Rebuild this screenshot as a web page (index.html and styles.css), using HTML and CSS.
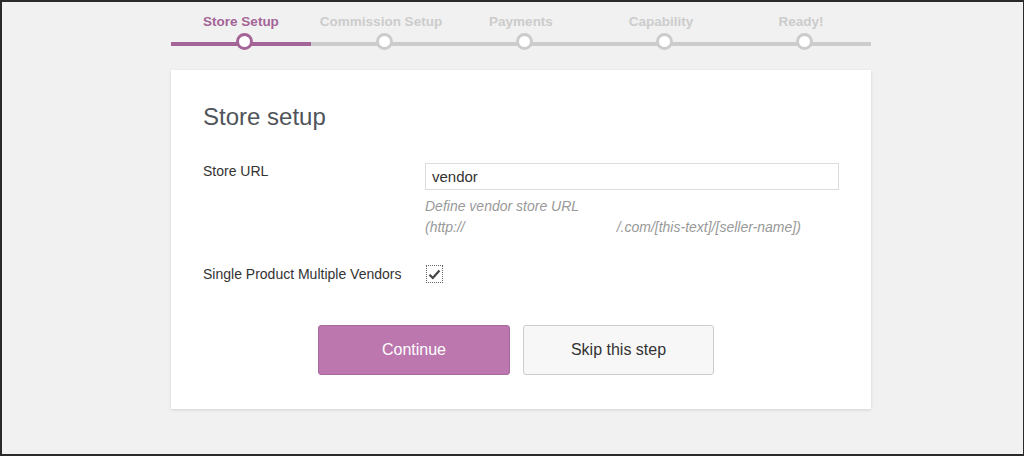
FILE: index.html
```html
<!DOCTYPE html>
<html>
<head>
<meta charset="utf-8">
<link rel="stylesheet" href="styles.css">
</head>
<body>
<div class="wrap">
  <ol class="steps">
    <li class="step active">Store Setup</li>
    <li class="step">Commission Setup</li>
    <li class="step">Payments</li>
    <li class="step">Capability</li>
    <li class="step">Ready!</li>
  </ol>
  <div class="card">
    <h1 class="title">Store setup</h1>
    <div class="row">
      <div class="label">Store URL</div>
      <div class="field">
        <div class="input">vendor</div>
        <p class="desc">Define vendor store URL<br>(http://<span class="redact"></span>/.com/[this-text]/[seller-name])</p>
      </div>
    </div>
    <div class="row row-check">
      <div class="label">Single Product Multiple Vendors</div>
      <div class="field">
        <span class="checkbox"><svg width="13" height="11" viewBox="0 0 13 11"><path d="M1.5 5.8 L4.8 9 L11.5 1.5" fill="none" stroke="#444" stroke-width="2.2"/></svg></span>
      </div>
    </div>
    <div class="actions">
      <div class="btn btn-primary">Continue</div>
      <div class="btn btn-secondary">Skip this step</div>
    </div>
  </div>
</div>
</body>
</html>
```

FILE: styles.css
```css
* { box-sizing: border-box; }
html, body { margin: 0; padding: 0; }
body {
  width: 1024px;
  height: 456px;
  background: #f1f1f1;
  border-top: 2px solid #2a2a2a;
  border-left: 2px solid #2a2a2a;
  border-bottom: 2px solid #2a2a2a;
  border-right: 1px solid #2a2a2a;
  font-family: "Liberation Sans", Arial, sans-serif;
  overflow: hidden;
}
.wrap {
  width: 700px;
  margin-left: 169px;
}
.steps {
  list-style: none;
  margin: 0;
  padding: 0;
  display: flex;
}
.step {
  position: relative;
  flex: 1;
  text-align: center;
  font-size: 13.5px;
  font-weight: 700;
  line-height: 20px;
  color: #ccc;
  padding: 10px 0 10px;
  border-bottom: 4px solid #ccc;
}
.step::before {
  content: "";
  position: absolute;
  left: calc(50% - 5.5px);
  bottom: -7.5px;
  width: 11px;
  height: 11px;
  border-radius: 50%;
  border: 3px solid #ccc;
  background: #fff;
}
.step.active {
  color: #a46497;
  border-bottom-color: #a46497;
}
.step.active::before {
  border-color: #a46497;
}
.card {
  margin-top: 24px;
  background: #fff;
  box-shadow: 0 1px 3px rgba(0,0,0,0.13);
  padding: 32px 32px 34px;
}
.title {
  margin: 0;
  font-size: 24px;
  line-height: 30px;
  font-weight: 400;
  color: #50545a;
}
.row {
  display: grid;
  grid-template-columns: 222px 1fr;
  margin-top: 31px;
}
.row-check {
  margin-top: 27px;
  align-items: center;
}
.label {
  font-size: 14px;
  line-height: 16px;
  color: #333;
}
.row-check .label { line-height: 18px; }
.input {
  height: 27px;
  border: 1px solid #ddd;
  font-size: 15px;
  line-height: 25px;
  padding: 0 6px;
  color: #333;
}
.desc {
  margin: 6px 0 0;
  font-size: 14px;
  line-height: 21px;
  font-style: italic;
  color: #999;
}
.redact {
  display: inline-block;
  width: 152px;
}
.checkbox {
  display: flex;
  align-items: center;
  justify-content: center;
  width: 17px;
  height: 18px;
  margin-left: 1px;
  border: 1px dotted #666;
  background: #fff;
}
.actions {
  display: flex;
  justify-content: center;
  gap: 13px;
  margin-top: 42px;
  padding-right: 10px;
}
.btn {
  width: 192px;
  height: 50px;
  border-radius: 3px;
  font-size: 16px;
  display: flex;
  align-items: center;
  justify-content: center;
}
.btn-primary {
  background: #bb77ae;
  border: 1px solid #a76b9b;
  color: #fff;
}
.btn-secondary {
  width: 191px;
  background: #f7f7f7;
  border: 1px solid #ccc;
  color: #333;
}
```
